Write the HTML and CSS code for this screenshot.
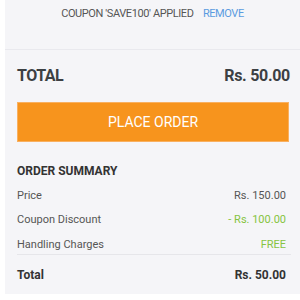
FILE: index.html
```html
<!DOCTYPE html>
<html lang="en">
<head>
  <meta charset="UTF-8">
  <title>Checkout</title>
  <link rel="stylesheet" href="styles.css">
</head>
<body>
  <div class="panel">
    <div class="coupon">
      <span class="coupon-text">COUPON 'SAVE100' APPLIED</span>
      <a href="javascript:;" class="remove">REMOVE</a>
    </div>
    <div class="total-bar">
      <span>TOTAL</span>
      <span class="amount">Rs. 50.00</span>
    </div>
    <a href="javascript:;" class="place-order">PLACE ORDER</a>
    <div class="summary">
      <h3>ORDER SUMMARY</h3>
      <div class="row"><span>Price</span><span>Rs. 150.00</span></div>
      <div class="row"><span>Coupon Discount</span><span class="green">- Rs. 100.00</span></div>
      <div class="row last"><span>Handling Charges</span><span class="green">FREE</span></div>
      <div class="row grand"><span>Total</span><span>Rs. 50.00</span></div>
    </div>
  </div>
</body>
</html>
```

FILE: styles.css
```css
*{
  margin:0;
  padding:0;
  box-sizing:border-box;
}
body{
  background:#fff;
  font-family:Roboto, "Liberation Sans", sans-serif;
  color:#333;
}
.panel{
  margin-left:5px;
  height:294px;
  background:#f5f5f8;
}
.coupon{
  height:50px;
  padding-top:8px;
  text-align:center;
  font-size:11px;
  line-height:12px;
  letter-spacing:-0.4px;
  border-bottom:1px solid #e9e9ee;
}
.coupon-text{
  color:#555;
}
.remove{
  color:#5a9be0;
  text-decoration:none;
  margin-left:7px;
}
.total-bar{
  display:flex;
  justify-content:space-between;
  padding:17px 10px 0 12px;
  font-size:16px;
  font-weight:bold;
  line-height:18px;
  letter-spacing:-0.5px;
  color:#3c4043;
}
.total-bar .amount{
  letter-spacing:-0.3px;
}
.place-order{
  display:block;
  margin:17px 11px 0 12px;
  height:40px;
  line-height:38px;
  background:#f7941d;
  border:1px solid #f9b060;
  color:#fff;
  text-align:center;
  font-size:14px;
  text-decoration:none;
}
.summary{
  padding:17px 14px 0 12px;
}
.summary h3{
  font-size:12px;
  line-height:24.5px;
  color:#333;
}
.row{
  display:flex;
  justify-content:space-between;
  font-size:11px;
  line-height:14px;
  color:#555;
  padding:5.25px 0;
}
.row.last{
  border-bottom:1px solid #e6e6ea;
  padding-bottom:2px;
  margin-right:-5px;
}
.row.last span:last-child{
  margin-right:5px;
}
.row.grand{
  padding-top:13px;
  font-size:12px;
  font-weight:bold;
  color:#333;
}
.green{
  color:#86c440;
}
```
